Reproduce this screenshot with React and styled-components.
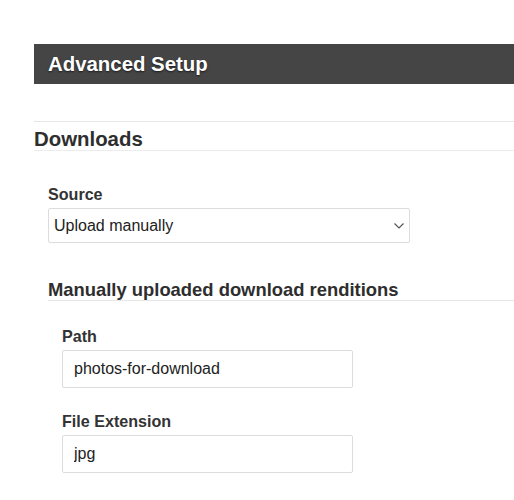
import React from "react";
import styled, { createGlobalStyle } from "styled-components";

const GlobalStyle = createGlobalStyle`
  html, body {
    margin: 0;
    padding: 0;
    background: #ffffff;
    overflow-x: hidden;
  }
  body {
    font-family: "Liberation Sans", Arial, Helvetica, sans-serif;
    color: #333333;
  }
  * { box-sizing: border-box; }
`;

const Page = styled.div`
  padding: 44px 0 40px 34px;
`;

const TitleBar = styled.h1`
  margin: 0;
  height: 40px;
  line-height: 40px;
  padding-left: 14px;
  background: #454545;
  color: #ffffff;
  font-size: 20.4px;
  font-weight: 700;
  text-shadow: 0 1px 2px rgba(0, 0, 0, 0.65);
  white-space: nowrap;
`;

const Section = styled.section`
  margin-top: 37px;
  border-top: 1px solid #e6e6e6;
  padding-top: 7px;
`;

const SectionTitle = styled.h2`
  margin: 0;
  font-size: 20.4px;
  line-height: 21px;
  font-weight: 700;
  color: #2e2e2e;
  border-bottom: 1px solid #ececec;
`;

const Indent = styled.div`
  padding-left: ${(p) => p.$by || 14}px;
`;

const Field = styled.div`
  margin-top: ${(p) => p.$top}px;
  display: flex;
  flex-direction: column;
  align-items: flex-start;
`;

const Label = styled.label`
  font-size: 16.1px;
  line-height: 20px;
  font-weight: 700;
  color: #333333;
  margin-bottom: 4px;
`;

const SelectWrap = styled.div`
  position: relative;
  width: 362px;
`;

const Select = styled.select`
  appearance: none;
  -webkit-appearance: none;
  width: 100%;
  height: 35px;
  margin: 0;
  padding: 0 28px 0 5px;
  border: 1px solid #dcdcdc;
  border-radius: 2px;
  background: #ffffff;
  font-family: inherit;
  font-size: 16px;
  color: #222222;
  outline: none;
`;

const Chevron = styled.svg`
  position: absolute;
  right: 4px;
  top: 50%;
  transform: translateY(-50%);
  pointer-events: none;
`;

const TextInput = styled.input`
  width: 291px;
  height: 38px;
  margin: 0;
  padding: 0 11px;
  border: 1px solid #dcdcdc;
  border-radius: 2px;
  background: #ffffff;
  font-family: inherit;
  font-size: 16px;
  color: #222222;
  outline: none;
`;

const SubTitle = styled.h3`
  margin: 37px 0 0;
  font-size: 18.4px;
  line-height: 20px;
  font-weight: 700;
  color: #2e2e2e;
  border-bottom: 1px solid #e6e6e6;
  white-space: nowrap;
`;

export default function App() {
  return (
    <>
      <GlobalStyle />
      <Page>
        <TitleBar>Advanced Setup</TitleBar>
        <Section>
          <SectionTitle>Downloads</SectionTitle>
          <Indent>
            <Field $top={33}>
              <Label htmlFor="source">Source</Label>
              <SelectWrap>
                <Select id="source" defaultValue="manual">
                  <option value="manual">Upload manually</option>
                  <option value="auto">Generate automatically</option>
                </Select>
                <Chevron width="14" height="8" viewBox="0 0 14 8">
                  <path d="M2.5 1.5 L7 6 L11.5 1.5" fill="none" stroke="#555" strokeWidth="1.2" />
                </Chevron>
              </SelectWrap>
            </Field>
            <SubTitle>Manually uploaded download renditions</SubTitle>
            <Indent>
              <Field $top={25}>
                <Label htmlFor="path">Path</Label>
                <TextInput id="path" defaultValue="photos-for-download" />
              </Field>
              <Field $top={23}>
                <Label htmlFor="ext">File Extension</Label>
                <TextInput id="ext" defaultValue="jpg" />
              </Field>
            </Indent>
          </Indent>
        </Section>
      </Page>
    </>
  );
}
